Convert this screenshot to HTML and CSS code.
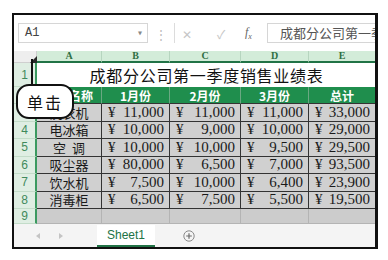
FILE: index.html
```html
<!DOCTYPE html>
<html lang="zh-CN">
<head>
  <meta charset="UTF-8" />
  <title>成都分公司第一季度销售业绩表</title>
  <link rel="stylesheet" href="styles.css">
</head>
<body>
  <div class="frame">

    <!-- Formula bar -->
    <div class="formula-bar">
      <div class="name-box">
        <span>A1</span>
        <span class="drop">&#9662;</span>
      </div>
      <span class="dots">&#8942;</span>
      <div class="fx-tools">
        <span class="tool cancel">&#10005;</span>
        <span class="tool enter">&#10003;</span>
        <span class="fx">f<sub>x</sub></span>
      </div>
      <div class="formula">成都分公司第一季度销售业绩表</div>
    </div>

    <!-- Sheet grid -->
    <div class="grid">
      <div class="corner"></div>
      <div class="col-head">A</div>
      <div class="col-head">B</div>
      <div class="col-head">C</div>
      <div class="col-head">D</div>
      <div class="col-head">E</div>

      <div class="row-head">1</div>
      <div class="title">成都分公司第一季度销售业绩表</div>

      <div class="row-head">2</div>
      <div class="th">产品名称</div>
      <div class="th">1月份</div>
      <div class="th">2月份</div>
      <div class="th">3月份</div>
      <div class="th">总计</div>

      <div class="row-head">3</div>
      <div class="name">洗衣机</div>
      <div class="money"><span>¥</span><span>11,000</span></div>
      <div class="money"><span>¥</span><span>11,000</span></div>
      <div class="money"><span>¥</span><span>11,000</span></div>
      <div class="money"><span>¥</span><span>33,000</span></div>

      <div class="row-head">4</div>
      <div class="name">电冰箱</div>
      <div class="money"><span>¥</span><span>10,000</span></div>
      <div class="money"><span>¥</span><span>9,000</span></div>
      <div class="money"><span>¥</span><span>10,000</span></div>
      <div class="money"><span>¥</span><span>29,000</span></div>

      <div class="row-head">5</div>
      <div class="name">空&nbsp;&nbsp;调</div>
      <div class="money"><span>¥</span><span>10,000</span></div>
      <div class="money"><span>¥</span><span>10,000</span></div>
      <div class="money"><span>¥</span><span>9,500</span></div>
      <div class="money"><span>¥</span><span>29,500</span></div>

      <div class="row-head">6</div>
      <div class="name">吸尘器</div>
      <div class="money"><span>¥</span><span>80,000</span></div>
      <div class="money"><span>¥</span><span>6,500</span></div>
      <div class="money"><span>¥</span><span>7,000</span></div>
      <div class="money"><span>¥</span><span>93,500</span></div>

      <div class="row-head">7</div>
      <div class="name">饮水机</div>
      <div class="money"><span>¥</span><span>7,500</span></div>
      <div class="money"><span>¥</span><span>10,000</span></div>
      <div class="money"><span>¥</span><span>6,400</span></div>
      <div class="money"><span>¥</span><span>23,900</span></div>

      <div class="row-head">8</div>
      <div class="name">消毒柜</div>
      <div class="money"><span>¥</span><span>6,500</span></div>
      <div class="money"><span>¥</span><span>7,500</span></div>
      <div class="money"><span>¥</span><span>5,500</span></div>
      <div class="money"><span>¥</span><span>19,500</span></div>

      <div class="row-head">9</div>
      <div class="empty"></div>
      <div class="empty"></div>
      <div class="empty"></div>
      <div class="empty"></div>
      <div class="empty"></div>
    </div>

    <!-- Sheet tabs -->
    <div class="tab-bar">
      <svg class="nav-arrow" width="4" height="6" viewBox="0 0 4 6"><polygon points="4,0 4,6 0,3" fill="#c4c4c4"/></svg>
      <svg class="nav-arrow" width="4" height="6" viewBox="0 0 4 6"><polygon points="0,0 0,6 4,3" fill="#c4c4c4"/></svg>
      <div class="sheet-tab">Sheet1</div>
      <svg class="add-sheet" width="12" height="12" viewBox="0 0 12 12">
        <circle cx="6" cy="6" r="5.2" fill="none" stroke="#8a8a8a" stroke-width="1"/>
        <path d="M6 3.2v5.6M3.2 6h5.6" stroke="#6a6a6a" stroke-width="1.2"/>
      </svg>
    </div>

    <!-- Annotation -->
    <svg class="pointer" width="12" height="30" viewBox="0 0 12 30">
      <polygon points="11,0 11,7 4,7" fill="#2a2a2a"/>
      <line x1="6" y1="3" x2="6" y2="30" stroke="#111" stroke-width="2"/>
    </svg>
    <div class="callout">单击</div>
  </div>
</body>
</html>
```

FILE: styles.css
```css
* {
  margin: 0;
  padding: 0;
  box-sizing: border-box;
}

body {
  background: #ffffff;
  font-family: "Noto Sans CJK SC", "Liberation Sans", sans-serif;
}

.frame {
  position: relative;
  margin: 13px 0 0 12px;
  width: 366px;
  height: 236px;
  border: 2px solid #111;
  border-right-width: 3px;
  background: #fff;
  overflow: hidden;
}

/* Formula bar */
.formula-bar {
  height: 36px;
  display: flex;
  align-items: center;
  padding-left: 4px;
}

.name-box {
  width: 130px;
  height: 20px;
  border: 1px solid #d6d6d6;
  display: flex;
  align-items: center;
  justify-content: space-between;
  padding: 0 4px 0 6px;
  font-family: "Liberation Mono", monospace;
  font-size: 12px;
  color: #444;
}

.name-box .drop {
  font-size: 10px;
  color: #888;
}

.dots {
  width: 26px;
  text-align: center;
  font-size: 12px;
  color: #bbb;
}

.fx-tools {
  width: 93px;
  height: 20px;
  border-left: 1px solid #dcdcdc;
  display: flex;
  align-items: center;
  padding-left: 6px;
  color: #c6c6c6;
  font-size: 12px;
}

.tool {
  width: 12px;
  text-align: center;
}

.cancel {
  margin-right: 22px;
}

.enter {
  margin-right: 18px;
}

.fx {
  font-family: "Liberation Serif", serif;
  font-style: italic;
  font-size: 12px;
  color: #666;
}

.fx sub {
  font-size: 8px;
}

.formula {
  flex: 1;
  height: 20px;
  border: 1px solid #d6d6d6;
  border-right: none;
  padding-left: 12px;
  font-size: 13px;
  line-height: 18px;
  color: #555;
  white-space: nowrap;
  overflow: hidden;
}

/* Grid */
.grid {
  display: grid;
  grid-template-columns: 23px 65px 68px 71px 68px 67px;
  grid-template-rows: 12px 24px 17px repeat(6, 17.5px) 15px;
  width: 362px;
}

.corner {
  background: #eeeeee;
  border-right: 1px solid #cfcfcf;
  border-bottom: 1px solid #cfcfcf;
}

.col-head {
  background: #d3ecd9;
  border-right: 1px solid #b6d5bf;
  border-bottom: 2px solid #217346;
  font-family: "Liberation Serif", serif;
  font-weight: bold;
  font-size: 10px;
  line-height: 10px;
  color: #2f6e44;
  text-align: center;
}

.row-head {
  background: #dfeee3;
  border-right: 2px solid #3b9a60;
  border-bottom: 1px solid #c3dcc9;
  font-family: "Liberation Sans", sans-serif;
  font-size: 12px;
  color: #3f8a5c;
  display: flex;
  align-items: center;
  justify-content: center;
}

.title {
  grid-column: 2 / -1;
  display: flex;
  align-items: center;
  justify-content: center;
  font-size: 16px;
  letter-spacing: 0.7px;
  color: #111;
  background: #fff;
}

.th {
  background: #1f8e4d;
  color: #fff;
  font-weight: bold;
  font-size: 12px;
  display: flex;
  align-items: center;
  justify-content: center;
  border-right: 1px solid #6aa882;
  border-bottom: 1px solid #333;
}

.name,
.money {
  background: #d0d0d0;
  border-right: 1px solid #333;
  border-bottom: 1px solid #333;
  display: flex;
  align-items: center;
  color: #1a1a1a;
}

.name {
  justify-content: center;
  font-size: 13px;
}

.money {
  justify-content: space-between;
  padding: 0 5px 0 6px;
  font-family: "Liberation Serif", serif;
  font-size: 15px;
}

.empty {
  background: #cccccc;
  border-right: 1px solid #b4b4b4;
  border-bottom: 1px solid #b4b4b4;
}

/* Sheet tabs */
.tab-bar {
  height: 23px;
  background: #f4f4f4;
  display: flex;
  align-items: center;
  padding-left: 22px;
}

.nav-arrow {
  margin-right: 19px;
}

.sheet-tab {
  margin-left: 15px;
  width: 58px;
  height: 22px;
  margin-top: 1px;
  background: #fff;
  border-bottom: 2px solid #217346;
  color: #217346;
  font-family: "Liberation Sans", sans-serif;
  font-size: 12px;
  display: flex;
  align-items: center;
  justify-content: center;
}

.add-sheet {
  margin-left: 28px;
}

/* Annotation overlay */
.pointer {
  position: absolute;
  left: 12px;
  top: 41px;
}

.callout {
  position: absolute;
  left: 2px;
  top: 69px;
  width: 58px;
  height: 35px;
  border: 2.5px solid #111;
  border-radius: 13px;
  background: #fff;
  font-size: 16px;
  letter-spacing: 2px;
  color: #111;
  display: flex;
  align-items: center;
  justify-content: center;
}
```
